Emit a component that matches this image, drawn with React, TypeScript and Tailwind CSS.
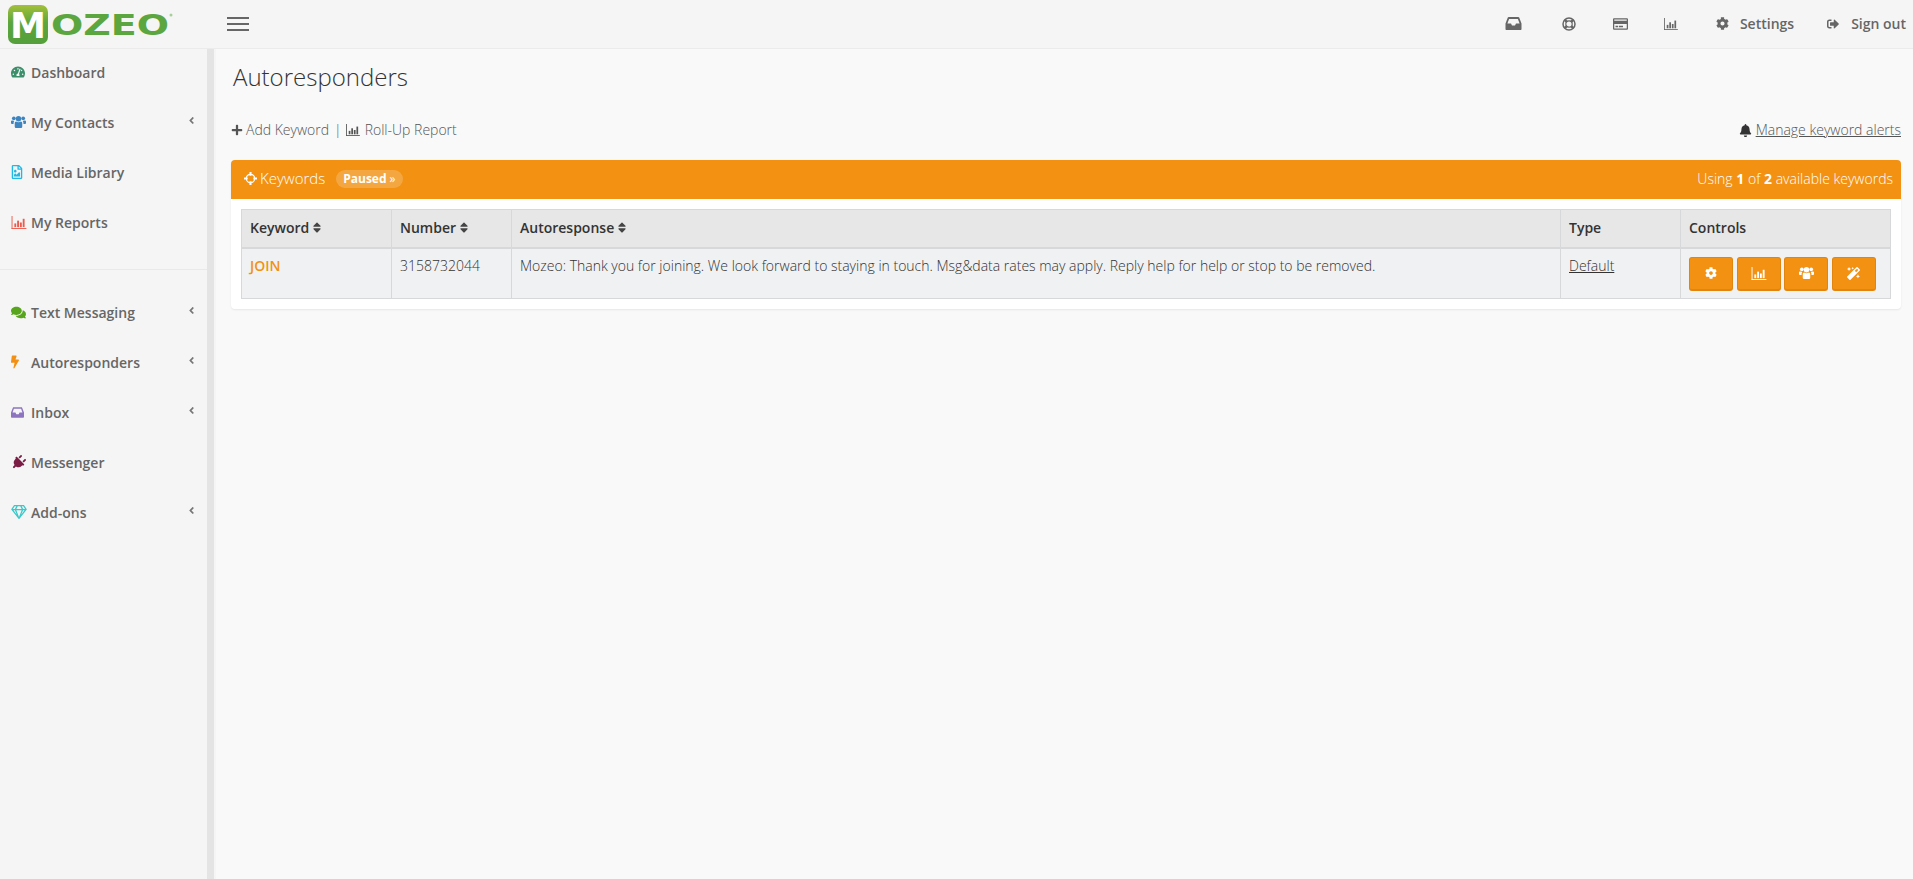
import type { ReactNode } from 'react';
import {
  FaAngleLeft,
  FaBell,
  FaBolt,
  FaCog,
  FaComments,
  FaMagic,
  FaPlug,
  FaPlus,
  FaRegCreditCard,
  FaRegFileImage,
  FaRegGem,
  FaSignOutAlt,
  FaSort,
  FaTachometerAlt,
} from 'react-icons/fa';

function BarChart({ className }: { className?: string }) {
  return (
    <svg viewBox="0 0 16 14" className={className} fill="currentColor" aria-hidden="true">
      <rect x="0" y="0" width="1" height="14" />
      <rect x="0" y="13" width="16" height="1" />
      <rect x="3" y="8" width="2" height="4" />
      <rect x="6" y="5" width="2" height="7" />
      <rect x="9" y="7" width="2" height="5" />
      <rect x="12" y="3" width="2" height="9" />
    </svg>
  );
}

// fontawesome 4 style icons, the package only has the newer shapes
function Users({ className }: { className?: string }) {
  return (
    <svg viewBox="0 0 16 14" className={className} fill="currentColor" aria-hidden="true">
      <circle cx="3" cy="3" r="2" />
      <circle cx="13" cy="3" r="2" />
      <circle cx="8" cy="3.6" r="2.9" />
      <path d="M0 6.4C0 5.7.6 5.4 1.4 5.4c.8 0 1.4.3 2 .6-.5.8-.7 1.8-.7 3H1C.4 9 0 8.6 0 8zM16 6.4c0-.7-.6-1-1.4-1-.8 0-1.4.3-2 .6.5.8.7 1.8.7 3H15c.6 0 1-.4 1-1z" />
      <path d="M4 8.4c0-1.200.6-2 1.500-2 .6.500 1.500.900 2.500.900s1.900-.4 2.500-.9c.9 0 1.500.8 1.500 2v3.400c0 1-.7 1.700-1.700 1.700H5.700C4.700 13.500 4 12.800 4 11.800z" />
    </svg>
  );
}

function Inbox({ className }: { className?: string }) {
  return (
    <svg viewBox="0 0 16 13" className={className} fill="currentColor" aria-hidden="true">
      <path
        fillRule="evenodd"
        d="M3.200 0h9.600c.4 0 .7.200.9.600L16 6.500V12c0 .6-.4 1-1 1H1c-.6 0-1-.4-1-1V6.500L2.300.6c.2-.4.500-.6.900-.6zm.4 2L1.900 6.500h3.600l1 2h3l1-2h3.600L12.400 2z"
      />
    </svg>
  );
}

function LifeRing({ className }: { className?: string }) {
  return (
    <svg viewBox="0 0 14 14" className={className} fill="none" stroke="currentColor" aria-hidden="true">
      <circle cx="7" cy="7" r="6" strokeWidth="1.500" />
      <circle cx="7" cy="7" r="3.200" strokeWidth="1.200" />
      <path d="M2.800 2.800l2 2M11.200 2.800l-2 2M2.800 11.200l2-2M11.200 11.200l-2-2" strokeWidth="2.600" />
    </svg>
  );
}

function Crosshair({ className }: { className?: string }) {
  return (
    <svg viewBox="0 0 14 14" className={className} fill="none" stroke="currentColor" aria-hidden="true">
      <circle cx="7" cy="7" r="4.500" strokeWidth="1.300" />
      <path d="M7 0v4M7 10v4M0 7h4M10 7h4" strokeWidth="2.200" />
    </svg>
  );
}

function Logo() {
  return (
    <svg width="170" height="40" viewBox="0 0 170 40" aria-label="Mozeo" className="ml-2 mt-[5px]">
      <defs>
        <linearGradient id="logoGreen" x1="0" y1="0" x2="0" y2="1">
          <stop offset="0" stopColor="#a3c03a" />
          <stop offset="0.45" stopColor="#5ca63c" />
          <stop offset="1" stopColor="#559f3d" />
        </linearGradient>
      </defs>
      <rect x="0" y="0" width="40" height="39" rx="7" fill="url(#logoGreen)" />
      <text x="20" y="33" textAnchor="middle" textLength="36" lengthAdjust="spacingAndGlyphs" fontFamily="'DejaVu Sans', sans-serif" fontWeight="700" fontSize="35" fill="#fff">
        M
      </text>
      <text x="43" y="30" textLength="118" lengthAdjust="spacingAndGlyphs" fontFamily="'DejaVu Sans', sans-serif" fontWeight="700" fontSize="29" fill="#5ba63f">
        OZEO
      </text>
      <circle cx="163" cy="10" r="1.500" fill="#a9cf98" />
    </svg>
  );
}

type NavEntry = { label: string; icon: ReactNode; sub?: boolean };

const primaryNav: NavEntry[] = [
  { label: 'Dashboard', icon: <FaTachometerAlt className="w-[14px] h-[14px] text-[#3c8f6b]" /> },
  { label: 'My Contacts', icon: <Users className="w-[15px] h-[14px] text-[#3d85c0]" />, sub: true },
  { label: 'Media Library', icon: <FaRegFileImage className="w-[12px] h-[14px] text-[#20b9e6]" /> },
  { label: 'My Reports', icon: <BarChart className="w-[16px] h-[13px] text-[#ec5a4d]" /> },
];

const secondaryNav: NavEntry[] = [
  { label: 'Text Messaging', icon: <FaComments className="w-[15px] h-[15px] text-[#57a51c]" />, sub: true },
  { label: 'Autoresponders', icon: <FaBolt className="w-[8px] h-[14px] text-[#f39013]" />, sub: true },
  { label: 'Inbox', icon: <Inbox className="w-[13px] h-[11px] text-[#8c74c0]" />, sub: true },
  { label: 'Messenger', icon: <FaPlug className="w-[15px] h-[15px] rotate-45 text-[#7b1c45]" /> },
  { label: 'Add-ons', icon: <FaRegGem className="w-[16px] h-[14px] text-[#3cc8c8]" />, sub: true },
];

function NavItem({ entry }: { entry: NavEntry }) {
  return (
    <a className="flex items-center h-[50px] pb-[4px] pl-[11px] pr-[10px] text-[14px] font-semibold text-[#666]">
      <span className="w-[20px] flex shrink-0">{entry.icon}</span>
      <span className="flex-1">{entry.label}</span>
      {entry.sub && <FaAngleLeft className="w-[11px] h-[11px] -mt-[4px] text-[#777]" />}
    </a>
  );
}

const cellBorder = 'border border-[#d6d8da]';

function SortHead({ label, className }: { label: string; className: string }) {
  return (
    <th className={`${cellBorder} border-b-2 pl-[8px] pr-[9px] pb-[2px] h-[38px] text-left text-[14px] font-semibold text-[#333] ${className}`}>
      <span className="inline-flex items-center gap-[3px]">
        {label}
        <FaSort className="w-[10px] h-[13px] text-[#444]" />
      </span>
    </th>
  );
}

function ControlButton({ children }: { children: ReactNode }) {
  return (
    <button className="w-[44px] h-[34px] flex items-center justify-center rounded-[3px] bg-[#f29112] border border-b-2 border-[#e2850f] text-white">
      {children}
    </button>
  );
}

function KeywordsPanel() {
  return (
    <section className="mt-[20px] rounded-[4px] bg-white shadow-[0_1px_2px_rgba(0,0,0,0.08)]">
      <div className="flex items-center justify-between h-[39px] pb-[2px] pl-[13px] pr-[8px] rounded-t-[4px] bg-[#f29112] text-white">
        <div className="flex items-center">
          <Crosshair className="w-[13px] h-[13px] mr-[3px]" />
          <span className="text-[15px] font-light">Keywords</span>
          <span className="ml-[11px] h-[18px] flex items-center px-[7px] rounded-full bg-white/20 text-[12px] font-bold">
            Paused<span className="ml-[3px] font-normal">»</span>
          </span>
        </div>
        <p className="text-[14px] font-light">
          Using <strong className="font-bold">1</strong> of <strong className="font-bold">2</strong> available keywords
        </p>
      </div>
      <div className="px-[10px] pt-[10px] pb-[10px]">
        <table className="w-full table-fixed border-collapse">
          <thead className="bg-[#e7e7e7]">
            <tr>
              <SortHead label="Keyword" className="w-[150px]" />
              <SortHead label="Number" className="w-[120px]" />
              <SortHead label="Autoresponse" className="" />
              <th className={`${cellBorder} border-b-2 w-[120px] px-[8px] pb-[2px] text-left text-[14px] font-semibold text-[#333]`}>Type</th>
              <th className={`${cellBorder} border-b-2 w-[210px] px-[8px] pb-[2px] text-left text-[14px] font-semibold text-[#333]`}>Controls</th>
            </tr>
          </thead>
          <tbody className="bg-[#f0f1f3] text-[14px] font-light text-[#333] align-top">
            <tr>
              <td className={`${cellBorder} px-[8px] pt-[6px] h-[51px] font-semibold text-[#f29112]`}>JOIN</td>
              <td className={`${cellBorder} px-[8px] pt-[6px]`}>3158732044</td>
              <td className={`${cellBorder} px-[8px] pt-[6px]`}>
                Mozeo: Thank you for joining. We look forward to staying in touch. Msg&amp;data rates may apply. Reply help for help or stop to be removed.
              </td>
              <td className={`${cellBorder} px-[8px] pt-[6px]`}>
                <a className="underline">Default</a>
              </td>
              <td className={`${cellBorder} px-[8px] pt-[8px]`}>
                <div className="flex gap-[3.600px]">
                  <ControlButton><FaCog className="w-[12px] h-[12px]" /></ControlButton>
                  <ControlButton><BarChart className="w-[16px] h-[13px]" /></ControlButton>
                  <ControlButton><Users className="w-[15px] h-[14px]" /></ControlButton>
                  <ControlButton><FaMagic className="w-[13px] h-[13px]" /></ControlButton>
                </div>
              </td>
            </tr>
          </tbody>
        </table>
      </div>
    </section>
  );
}

export default function App() {
  return (
    <div className="h-screen flex flex-col bg-[#f9f9f9] overflow-hidden font-['Open_Sans',sans-serif]">
      {/* Top bar */}
      <header className="h-[49px] shrink-0 flex items-start bg-[#f5f5f5] border-b border-[#ebebeb]">
        <div className="w-[227px] shrink-0 flex">
          <Logo />
        </div>
        <button className="mt-[17px] w-[22px] flex flex-col gap-[4px]" aria-label="Menu">
          <span className="h-[2px] bg-[#666]" />
          <span className="h-[2px] bg-[#666]" />
          <span className="h-[2px] bg-[#666]" />
        </button>
        <nav className="ml-auto h-full pb-[1px] flex items-center text-[14px] font-semibold text-[#666] pr-[7px]">
          <Inbox className="w-[17px] h-[13px] mr-[40px]" />
          <LifeRing className="w-[14px] h-[14px] mr-[37px]" />
          <FaRegCreditCard className="w-[15px] h-[14px] mr-[35px]" />
          <BarChart className="w-[16px] h-[12px] mr-[37px]" />
          <FaCog className="w-[13px] h-[13px] mr-[11px]" />
          <span className="mr-[33px]">Settings</span>
          <FaSignOutAlt className="w-[12px] h-[12px] mr-[12px]" />
          <span>Sign out</span>
        </nav>
      </header>

      <div className="flex flex-1 min-h-0">
        {/* Sidebar */}
        <aside className="w-[207px] shrink-0 bg-[#f5f5f5]">
          {primaryNav.map((entry) => (
            <NavItem key={entry.label} entry={entry} />
          ))}
          <div className="mt-[20px] mb-[19px] border-t border-[#e9e9e9]" />
          {secondaryNav.map((entry) => (
            <NavItem key={entry.label} entry={entry} />
          ))}
        </aside>
        <div className="w-[7px] shrink-0 bg-[#e4e4e4]" />
        <div className="w-[2px] shrink-0 bg-[#f5f5f5]" />

        {/* Main */}
        <main className="flex-1 min-w-0 pl-[15px] pr-[12px]">
          <h1 className="mt-[11px] pl-[2px] text-[24px] leading-[33px] font-light text-[#333]">Autoresponders</h1>
          <div className="mt-[27px] flex items-center justify-between text-[14px] leading-[20px] font-light text-[#555]">
            <div className="flex items-center">
              <FaPlus className="w-[12px] h-[12px] mr-[3px] text-[#555]" />
              <span>Add Keyword</span>
              <span className="ml-[5px] mr-[3px]">|</span>
              <BarChart className="w-[16px] h-[12px] mr-[4px] text-[#555]" />
              <span>Roll-Up Report</span>
            </div>
            <div className="flex items-center">
              <FaBell className="w-[13px] h-[13px] mr-[4px] text-[#333]" />
              <a className="underline">Manage keyword alerts</a>
            </div>
          </div>
          <KeywordsPanel />
        </main>
      </div>
    </div>
  );
}
